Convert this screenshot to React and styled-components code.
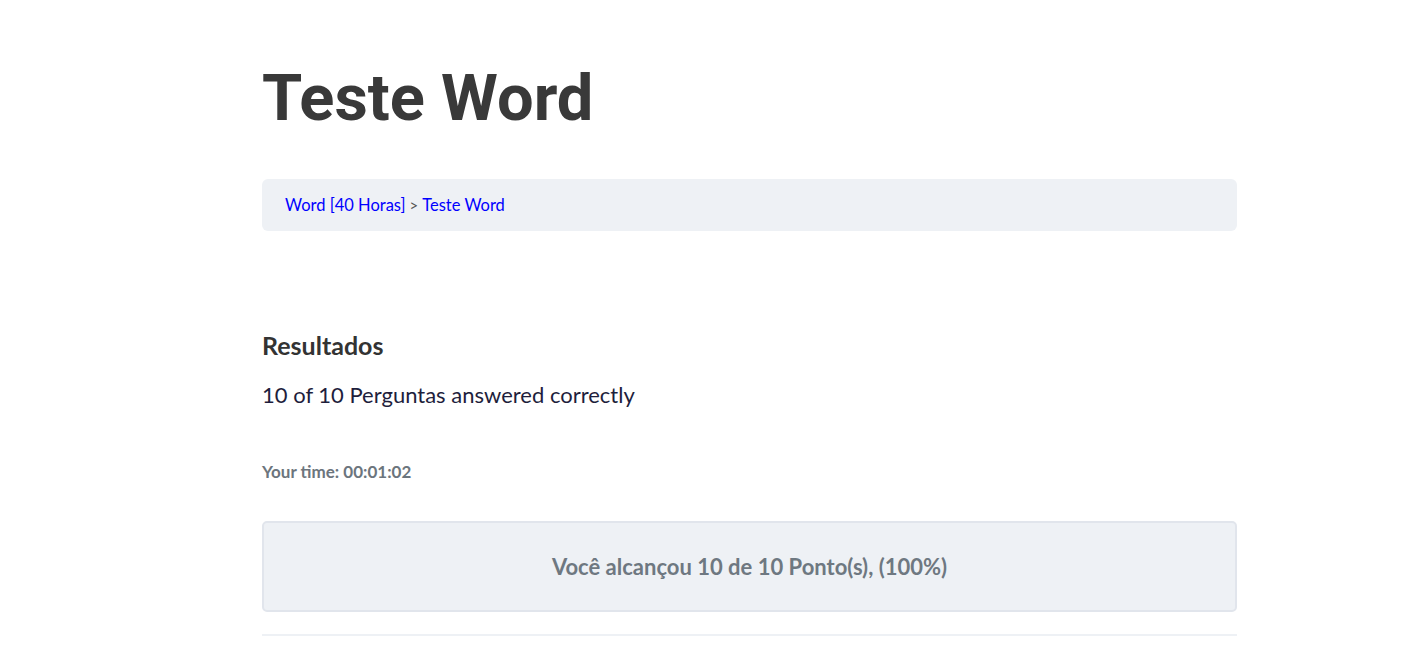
import React from "react";
import styled, { createGlobalStyle } from "styled-components";

const Global = createGlobalStyle`
  html, body { margin: 0; padding: 0; background: #fff; }
  body { font-family: Lato, "Noto Sans", sans-serif; }
`;

const Page = styled.main`
  width: 975px;
  margin-left: 262px;
  padding-top: 58px;
`;

const Title = styled.h1`
  margin: 0;
  font-family: Roboto, sans-serif;
  font-weight: 700;
  font-size: 65px;
  line-height: 80px;
  color: #393939;
`;

const Breadcrumb = styled.nav`
  margin-top: 41px;
  height: 52px;
  box-sizing: border-box;
  padding: 0 23px;
  display: flex;
  align-items: center;
  gap: 4px;
  background: #eef1f5;
  border-radius: 6px;
  font-size: 16.5px;
  color: #444;
`;

const Crumb = styled.a`
  color: #0000ff;
  text-decoration: none;
`;

const Sep = styled.span`
  color: #555;
  font-size: 15px;
`;

const Results = styled.section`
  margin-top: 99px;
`;

const Heading = styled.h2`
  margin: 0;
  font-size: 25px;
  font-weight: 700;
  color: #333;
  line-height: 30px;
`;

const Summary = styled.p`
  margin: 20px 0 0;
  font-size: 22px;
  color: #1e1e3c;
  line-height: 30px;
`;

const Time = styled.p`
  margin: 52px 0 0;
  font-size: 17px;
  font-weight: 700;
  color: #6c757d;
  line-height: 20px;
`;

const ScoreBox = styled.div`
  margin-top: 39px;
  height: 91px;
  box-sizing: border-box;
  display: flex;
  align-items: center;
  justify-content: center;
  background: #eef1f5;
  border: 2px solid #e1e5ec;
  border-radius: 5px;
  font-size: 22px;
  font-weight: 700;
  color: #6e7881;
`;

const Divider = styled.hr`
  margin: 22px 0 0;
  border: 0;
  border-top: 2px solid #eef1f5;
`;

export default function App() {
  return (
    <>
      <Global />
      <Page>
        <Title>Teste Word</Title>
        <Breadcrumb>
          <Crumb href="#">Word [40 Horas]</Crumb>
          <Sep>&gt;</Sep>
          <Crumb href="#">Teste Word</Crumb>
        </Breadcrumb>
        <Results>
          <Heading>Resultados</Heading>
          <Summary>10 of 10 Perguntas answered correctly</Summary>
          <Time>Your time: 00:01:02</Time>
          <ScoreBox>Você alcançou 10 de 10 Ponto(s), (100%)</ScoreBox>
          <Divider />
        </Results>
      </Page>
    </>
  );
}
